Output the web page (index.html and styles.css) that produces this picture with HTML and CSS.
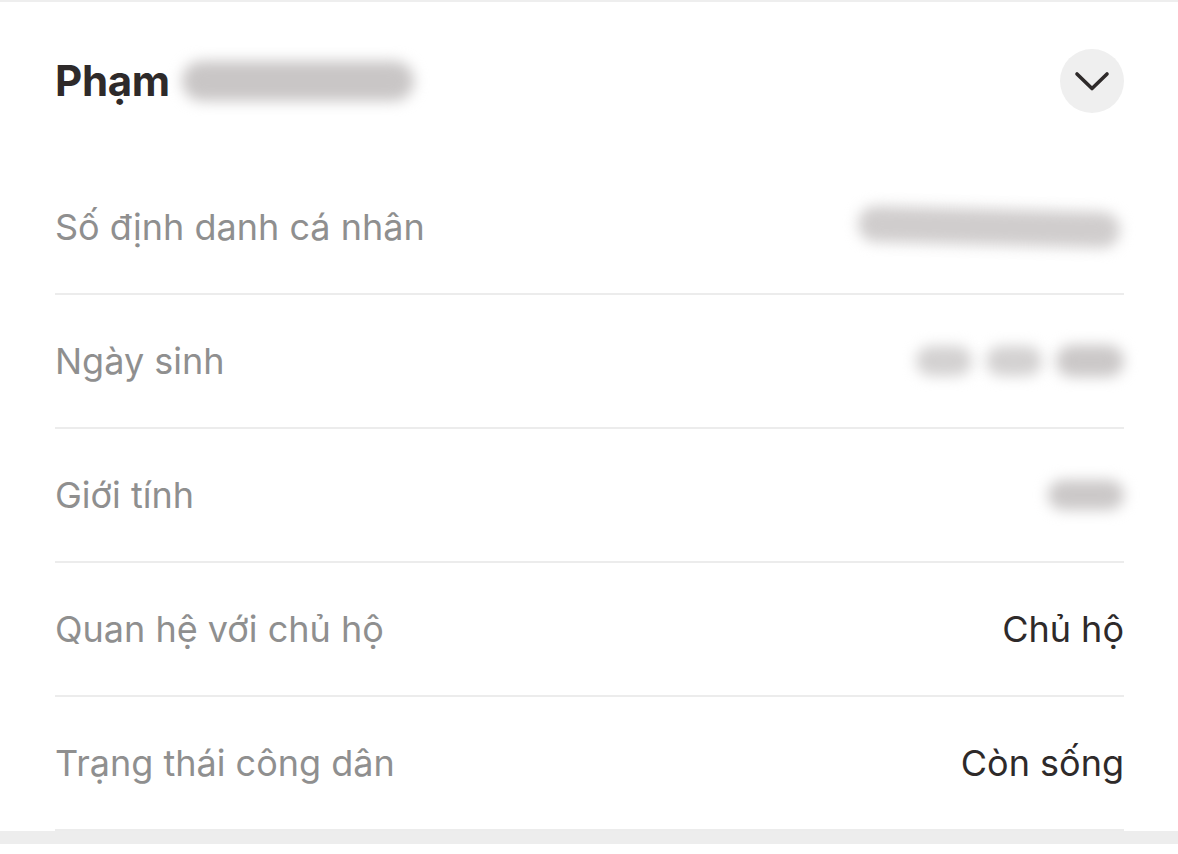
FILE: index.html
```html
<!DOCTYPE html>
<html lang="vi">
<head>
  <meta charset="UTF-8">
  <title>Thông tin thành viên hộ</title>
  <link rel="stylesheet" href="styles.css">
</head>
<body>

  <div class="edge"></div>

  <section class="member">
    <div class="member-head">
      <h2 class="member-name">Phạm <span class="redact redact-name" aria-hidden="true"></span></h2>
      <button class="toggle" aria-label="Thu gọn">
        <svg width="64" height="64" viewBox="0 0 64 64">
          <path d="M17 25 L32 39.5 L47 25" fill="none" stroke="#2e2a2a" stroke-width="3.6" stroke-linecap="round" stroke-linejoin="round"/>
        </svg>
      </button>
    </div>

    <div class="info">
      <div class="info-row">
        <span class="label">Số định danh cá nhân</span>
        <span class="value"><span class="redact redact-id" aria-hidden="true"></span></span>
      </div>
      <div class="info-row">
        <span class="label">Ngày sinh</span>
        <span class="value date">
          <span class="redact redact-dd" aria-hidden="true"></span>
          <span class="redact redact-dd" aria-hidden="true"></span>
          <span class="redact redact-yy" aria-hidden="true"></span>
        </span>
      </div>
      <div class="info-row">
        <span class="label">Giới tính</span>
        <span class="value"><span class="redact redact-sex" aria-hidden="true"></span></span>
      </div>
      <div class="info-row">
        <span class="label">Quan hệ với chủ hộ</span>
        <span class="value">Chủ hộ</span>
      </div>
      <div class="info-row">
        <span class="label">Trạng thái công dân</span>
        <span class="value">Còn sống</span>
      </div>
    </div>
  </section>

  <div class="gap"></div>
  <section class="member next"></section>

</body>
</html>
```

FILE: styles.css
```css
body {
  margin: 0;
  font-family: Inter, "Noto Sans", sans-serif;
  background: #fff;
  color: #2e2a2a;
}

.edge {
  height: 2px;
  background: #eeeeee;
}

.member {
  padding: 0 54px 0 55px;
}

.member-head {
  display: flex;
  align-items: center;
  justify-content: space-between;
  height: 161px;
  margin-top: -2px;
}

.member-name {
  margin: 0;
  font-size: 42px;
  font-weight: 700;
  letter-spacing: -0.3px;
  display: flex;
  align-items: center;
  gap: 12px;
}

.toggle {
  width: 64px;
  height: 64px;
  padding: 0;
  border: none;
  border-radius: 50%;
  background: #efefef;
  display: flex;
  align-items: center;
  justify-content: center;
}

.info-row {
  display: flex;
  align-items: center;
  justify-content: space-between;
  height: 132px;
  border-bottom: 2px solid #ececec;
  font-size: 36px;
}

.label {
  color: #8f8f8f;
}

.value {
  color: #2e2a2a;
  display: flex;
  align-items: center;
  gap: 14px;
}

.redact {
  display: inline-block;
  background: #cbc8c8;
  border-radius: 20px;
  filter: blur(7px);
}

.redact-name {
  width: 232px;
  height: 40px;
  background: #c9c6c6;
}

.redact-id {
  width: 262px;
  height: 36px;
  margin-right: 4px;
  background: #d0cdcd;
  transform: rotate(1.5deg);
}

.redact-dd {
  width: 56px;
  height: 30px;
  background: #d3d1d1;
}

.redact-yy {
  width: 68px;
  height: 32px;
}

.redact-sex {
  width: 76px;
  height: 30px;
}

.gap {
  height: 13px;
  background: #ededed;
}

.next {
  height: 40px;
}
```
